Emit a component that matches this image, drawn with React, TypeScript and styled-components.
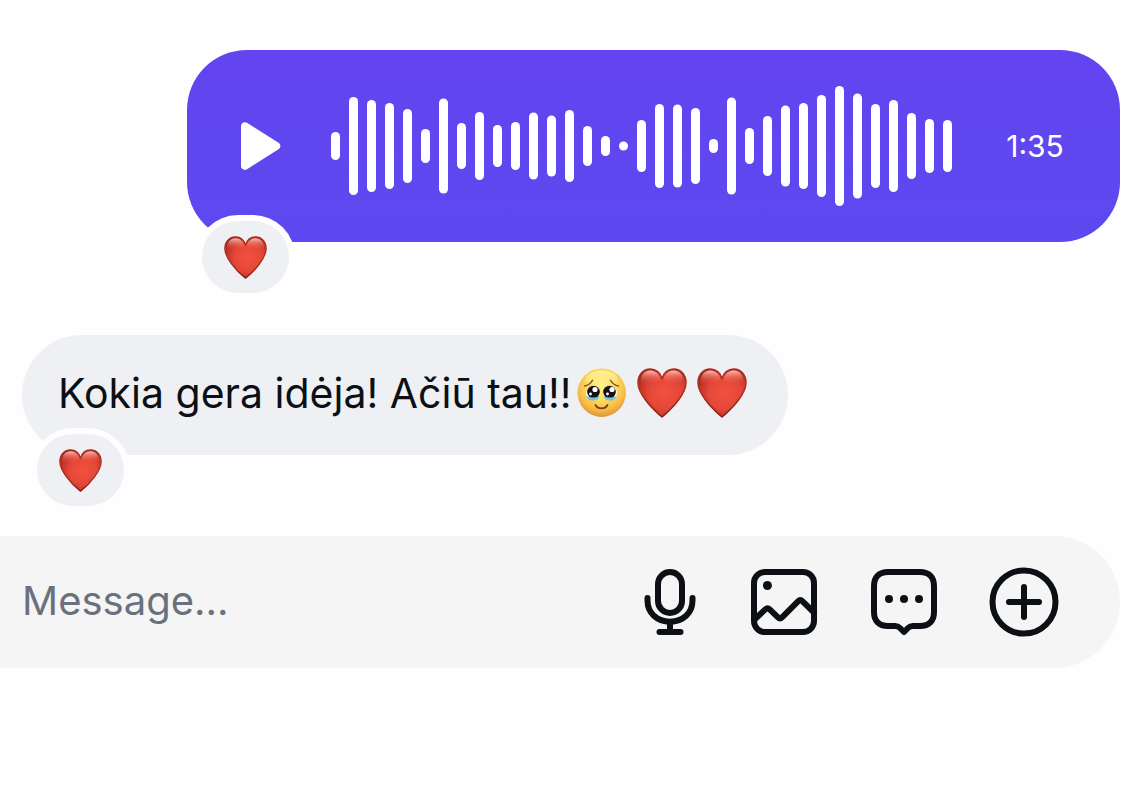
import React, { useId } from "react";
import styled, { createGlobalStyle } from "styled-components";

const GlobalStyle = createGlobalStyle`
  *, *::before, *::after { box-sizing: border-box; }
  body {
    margin: 0;
    background: #fefefe;
    color: #0c1014;
    font-family: Inter, "Liberation Sans", sans-serif;
  }
`;

const Page = styled.main`
  display: flex;
  flex-direction: column;
  padding: 50px 24px 40px 0;
`;

const Bubble = styled.article<{ $own?: boolean }>`
  position: relative;
  display: flex;
  align-items: center;
  align-self: ${(p) => (p.$own ? "flex-end" : "flex-start")};
  min-height: ${(p) => (p.$own ? 192 : 120)}px;
  margin-left: ${(p) => (p.$own ? 0 : 22)}px;
  margin-bottom: ${(p) => (p.$own ? 93 : 81)}px;
  padding: 0 ${(p) => (p.$own ? 54 : 36)}px;
  border-radius: 60px;
  background: ${(p) => (p.$own ? "linear-gradient(#6344f0, #5d49ef)" : "#eff0f4")};
  color: ${(p) => (p.$own ? "#ffffff" : "#0c1014")};
`;

const MessageText = styled.p`
  display: flex;
  align-items: center;
  margin: 0;
  padding-bottom: 4px;
  font-size: 41px;
  line-height: 56px;
`;

const Emoji = styled.svg<{ $size: number }>`
  flex: none;
  display: block;
  width: ${(p) => p.$size}px;
  height: ${(p) => p.$size}px;
`;

const EmojiRow = styled.span`
  display: flex;
  gap: 10px;
  padding: 0 5px;
`;

const Reaction = styled.button`
  position: absolute;
  left: 15px;
  bottom: -51px;
  display: flex;
  align-items: center;
  justify-content: center;
  width: 87px;
  height: 72px;
  padding: 0;
  border: 0;
  border-radius: 36px;
  background: #eff0f4;
  box-shadow: 0 0 0 6px #fefefe;
  cursor: pointer;
`;

const IconButton = styled.button<{ $width?: number }>`
  flex: none;
  width: ${(p) => p.$width ?? 72}px;
  padding: 0;
  border: 0;
  background: none;
  color: inherit;
  cursor: pointer;

  svg {
    display: block;
    width: 100%;
  }
`;

const Waveform = styled.svg`
  flex: none;
  width: 621px;
  height: 120px;
  margin: 0 52px 0 50px;
`;

const Duration = styled.time`
  min-width: 62px;
  text-align: center;
  font-size: 30px;
  line-height: 40px;
`;

const Composer = styled.form`
  display: flex;
  align-items: center;
  gap: 48px;
  min-height: 132px;
  padding: 0 60px 0 22px;
  border-radius: 0 66px 66px 0;
  background: #f5f5f5;
`;

const MessageInput = styled.input`
  flex: 1;
  min-width: 0;
  height: 60px;
  padding: 0 0 4px;
  border: 0;
  outline: 0;
  background: none;
  color: inherit;
  font: inherit;
  font-size: 40px;

  &::placeholder {
    color: #6a717d;
    opacity: 1;
  }
`;

const LEVELS = [
  28, 98, 92, 86, 74, 34, 95, 46, 68, 42, 48, 67, 61, 72, 40, 20, 9, 52, 84, 83,
  76, 14, 97, 36, 60, 81, 86, 102, 120, 105, 84, 92, 66, 54, 52,
];

const HEART =
  "M25 49C23 47.500 14 39.500 8.500 32C4 26 1 20.500 1 14.500C1 6.500 6.500 1 13.200 1C19 1 23.500 4.800 25 10.700C26.500 4.800 31 1 36.800 1C43.500 1 49 6.500 49 14.500C49 20.500 46 26 41.500 32C36 39.500 27 47.500 25 49Z";

function Heart({ size = 50 }: { size?: number }) {
  const id = useId();
  return (
    <Emoji $size={size} viewBox="0 0 50 50" role="img" aria-label="Red heart">
      <defs>
        <radialGradient id={`${id}body`} cx="0.56" cy="0.5" r="0.6">
          <stop offset="0" stopColor="#f2513f" />
          <stop offset="0.55" stopColor="#e54738" />
          <stop offset="0.85" stopColor="#c43527" />
          <stop offset="1" stopColor="#a82a1c" />
        </radialGradient>
        <linearGradient id={`${id}edge`} x1="0" y1="0" x2="0" y2="1">
          <stop offset="0" stopColor="#a32a20" />
          <stop offset="0.5" stopColor="#ae3224" />
          <stop offset="1" stopColor="#7d1d10" />
        </linearGradient>
        <linearGradient id={`${id}shine`} x1="0" y1="0" x2="0" y2="1">
          <stop offset="0" stopColor="#ffd9d2" stopOpacity="0.85" />
          <stop offset="0.5" stopColor="#fb9488" stopOpacity="0.4" />
          <stop offset="1" stopColor="#ee5040" stopOpacity="0" />
        </linearGradient>
      </defs>
      <path d={HEART} fill={`url(#${id}body)`} />
      <path d="M3.500 15C3 7 8 2.500 13.200 2.500C18.500 2.500 22.500 6 23.500 12C18 16 8 17 3.500 15Z" fill={`url(#${id}shine)`} />
      <path d="M46.500 15C47 7 42 2.500 36.800 2.500C31.500 2.500 27.500 6 26.500 12C32 16 42 17 46.500 15Z" fill={`url(#${id}shine)`} />
      <path d={HEART} fill="none" stroke={`url(#${id}edge)`} strokeWidth="1.500" strokeLinejoin="round" />
    </Emoji>
  );
}

function TearfulFace() {
  const id = useId();
  return (
    <Emoji $size={50} viewBox="0 0 50 50" role="img" aria-label="Face holding back tears">
      <defs>
        <radialGradient id={`${id}skin`} cx="0.5" cy="0.36" r="0.66">
          <stop offset="0" stopColor="#fff08a" />
          <stop offset="0.45" stopColor="#fddc60" />
          <stop offset="0.75" stopColor="#f5bb45" />
          <stop offset="1" stopColor="#dc9233" />
        </radialGradient>
        <linearGradient id={`${id}glow`} x1="0" y1="0" x2="0" y2="1">
          <stop offset="0" stopColor="#fff8b0" stopOpacity="0.7" />
          <stop offset="1" stopColor="#fff6a0" stopOpacity="0" />
        </linearGradient>
      </defs>
      <circle cx="24.700" cy="24.700" r="24.200" fill={`url(#${id}skin)`} />
      <ellipse cx="24.700" cy="11" rx="16" ry="8.500" fill={`url(#${id}glow)`} />
      <g fill="none" stroke="#8a551d" strokeWidth="1.500" strokeLinecap="round">
        <path d="M7.500 18C10.500 17.500 13.500 15.500 15.500 12.300" />
        <path d="M41.500 18C38.500 17.500 35.500 15.500 33.500 12.300" />
        <path d="M18.500 37C21 41.500 28 41.500 30.500 37" stroke="#7a3f14" strokeWidth="1.800" />
      </g>
      {[16, 33].map((x, i) => (
        <g key={x}>
          <circle cx={x} cy="25" r="7" fill="#ffffff" />
          <circle cx={i ? x - 0.5 : x + 0.5} cy="24" r="6.300" fill="#17110f" />
          <path d={`M${x - 6.500} 28Q${x} 31 ${x + 6.500} 28C${x + 5.500} 34 ${x - 5.500} 34 ${x - 6.500} 28Z`} fill="#6fc0e6" />
          <circle cx={x + 2} cy="21.500" r="2.600" fill="#ffffff" />
          <circle cx={x - 2.500} cy="26" r="1.400" fill="#ffffff" />
        </g>
      ))}
    </Emoji>
  );
}

const strokeProps = {
  fill: "none",
  stroke: "currentColor",
  strokeWidth: 6,
  strokeLinecap: "round" as const,
  strokeLinejoin: "round" as const,
  "aria-hidden": true,
};

export default function App() {
  return (
    <>
      <GlobalStyle />
      <Page>
        <Bubble $own>
          <IconButton type="button" aria-label="Play voice message" $width={40}>
            <svg viewBox="0 0 40 48" aria-hidden="true">
              <path
                d="M0 4C0 .8 3.200-.8 6 .8L37.500 20.800C40 22.400 40 25.600 37.500 27.200L6 47.200C3.200 48.800 0 47.200 0 44Z"
                fill="currentColor"
              />
            </svg>
          </IconButton>
          <Waveform viewBox="0 0 621 120" role="img" aria-label="Voice message waveform">
            {LEVELS.map((h, i) => (
              <rect key={i} x={i * 18} y={60 - h / 2} width="9" height={h} rx="4.500" fill="currentColor" />
            ))}
          </Waveform>
          <Duration dateTime="PT1M35S">1:35</Duration>
          <Reaction type="button" aria-label="Heart reaction">
            <Heart size={43} />
          </Reaction>
        </Bubble>

        <Bubble>
          <MessageText>
            Kokia gera idėja! Ačiū tau!!
            <EmojiRow>
              <TearfulFace />
              <Heart />
              <Heart />
            </EmojiRow>
          </MessageText>
          <Reaction type="button" aria-label="Heart reaction">
            <Heart size={43} />
          </Reaction>
        </Bubble>

        <Composer onSubmit={(e) => e.preventDefault()}>
          <MessageInput type="text" aria-label="Message" placeholder="Message..." />
          <IconButton type="button" aria-label="Record voice message" $width={60}>
            <svg viewBox="0 0 60 72" {...strokeProps}>
              <rect x="18" y="6" width="24" height="41" rx="12" />
              <path d="M7.500 32V34.500C7.500 47 17 55.700 30 55.700S52.500 47 52.500 34.500V32M30 57V65M19.500 66H40.500" />
            </svg>
          </IconButton>
          <IconButton type="button" aria-label="Send image">
            <svg viewBox="0 0 72 72" {...strokeProps}>
              <rect x="6" y="6" width="60" height="60" rx="11" />
              <circle cx="19.400" cy="19.500" r="4.500" fill="currentColor" stroke="none" />
              <path d="M6.500 53.500L17.300 43.400Q19.500 41.300 21.700 43.400L29.700 51.200Q32 53.500 34.300 51.200L50 35.300Q52.300 33 54.600 35.300L66 46.500" />
            </svg>
          </IconButton>
          <IconButton type="button" aria-label="Quick replies">
            <svg viewBox="0 0 72 72" {...strokeProps}>
              <path d="M20 6H52C61 6 66 11 66 20V46C66 55 61 60 52 60H45Q42 60 40 62L36 66L32 62Q30 60 27 60H20C11 60 6 55 6 46V20C6 11 11 6 20 6Z" />
              <g fill="currentColor" stroke="none">
                <circle cx="21" cy="33" r="4" />
                <circle cx="36" cy="33" r="4" />
                <circle cx="51" cy="33" r="4" />
              </g>
            </svg>
          </IconButton>
          <IconButton type="button" aria-label="More options">
            <svg viewBox="0 0 72 72" {...strokeProps}>
              <circle cx="36" cy="36" r="31.500" />
              <path d="M36 21V51M21 36H51" />
            </svg>
          </IconButton>
        </Composer>
      </Page>
    </>
  );
}
